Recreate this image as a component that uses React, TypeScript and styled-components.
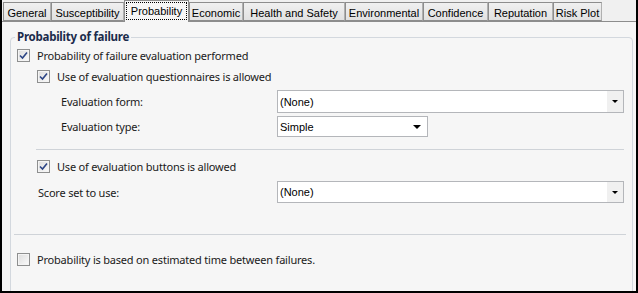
import React from 'react';
import styled, { createGlobalStyle } from 'styled-components';

const GlobalStyle = createGlobalStyle`
  html, body {
    margin: 0;
    padding: 0;
    background: #f0f0f0;
  }
  body {
    font-family: 'Noto Sans', 'Liberation Sans', sans-serif;
  }
`;

const Frame = styled.div`
  width: 638px;
  height: 293px;
  box-sizing: border-box;
  border: solid 2px #000;
  border-top: none;
  background: #f0f0f0;
  display: flex;
  flex-direction: column;
  overflow: hidden;
`;

const TabStrip = styled.ul`
  list-style: none;
  margin: 0;
  padding: 1px 0 0 1px;
  height: 21px;
  box-sizing: border-box;
  display: flex;
  align-items: flex-end;
  position: relative;
  z-index: 1;
`;

const Tab = styled.li<{ $active?: boolean; $w: number }>`
  font-family: 'Liberation Sans', Arial, sans-serif;
  font-size: 11px;
  color: #000;
  box-sizing: border-box;
  width: ${(p) => p.$w}px;
  height: ${(p) => (p.$active ? '22px' : '19px')};
  margin-bottom: ${(p) => (p.$active ? '-1px' : '0')};
  padding: ${(p) => (p.$active ? '2px 2px 0' : '2px 0 0')};
  border: solid 1px #8d8d8d;
  border-right-color: ${(p) => (p.$active ? '#8d8d8d' : '#b0b0b0')};
  border-bottom: ${(p) => (p.$active ? 'none' : 'solid 1px #8d8d8d')};
  background: ${(p) => (p.$active ? '#f6f6f6' : 'linear-gradient(#f0f0f0, #e1e1e1)')};
  line-height: 14px;
  white-space: nowrap;
  text-align: center;
  flex: none;

  & > span {
    display: ${(p) => (p.$active ? 'block' : 'inline')};
    outline: ${(p) => (p.$active ? 'dotted 1px #000' : 'none')};
    line-height: 16px;
  }
`;

const Panel = styled.div`
  flex: 1;
  border-top: solid 1px #8d8d8d;
  background: #f6f6f6;
  padding: 7px 3px 0 8px;
  overflow: hidden;
`;

const Group = styled.fieldset`
  margin: 0;
  padding: 0 0 30px;
  border: solid 1px #d3d8de;
  border-radius: 4px;
  min-width: 0;
`;

const Legend = styled.legend`
  margin-left: 4px;
  padding: 0 2px;
  font-size: 11.5px;
  letter-spacing: -0.25px;
  font-weight: bold;
  line-height: 16px;
  color: #1b2b4b;
`;

const Row = styled.div<{ $indent: number; $mt?: number; $h: number }>`
  display: flex;
  align-items: center;
  height: ${(p) => p.$h}px;
  margin-top: ${(p) => p.$mt ?? 0}px;
  padding-left: ${(p) => p.$indent}px;
  padding-right: 8px;
  font-size: 11px;
  letter-spacing: -0.2px;
  color: #1a1a1a;
`;

const Box = styled.span`
  width: 13px;
  height: 13px;
  box-sizing: border-box;
  border: solid 1px #8e8f8f;
  background: linear-gradient(135deg, #dcdcdc, #fbfbfb);
  box-shadow: inset 0 0 0 1px #f4f4f4;
  display: inline-flex;
  align-items: center;
  justify-content: center;
  margin-right: 7px;
  flex: none;
`;

const Label = styled.span<{ $w?: number }>`
  width: ${(p) => (p.$w ? `${p.$w}px` : 'auto')};
  flex: none;
  white-space: nowrap;
`;

const Select = styled.div<{ $w?: number }>`
  box-sizing: border-box;
  width: ${(p) => (p.$w ? `${p.$w}px` : 'auto')};
  flex: ${(p) => (p.$w ? 'none' : '1')};
  height: 100%;
  border: solid 1px #b4b6ba;
  background: #fff;
  display: flex;
  align-items: stretch;
  font-family: 'Liberation Sans', Arial, sans-serif;
  font-size: 11px;
  letter-spacing: 0;
  color: #000;

  & > span {
    flex: 1;
    display: flex;
    align-items: center;
    padding-left: 2px;
  }
`;

const Arrow = styled.i<{ $flat?: boolean }>`
  width: ${(p) => (p.$flat ? '20px' : '16px')};
  background: ${(p) => (p.$flat ? '#fff' : '#f0f0f0')};
  display: flex;
  align-items: center;
  justify-content: center;

  &::after {
    content: '';
    border-left: ${(p) => (p.$flat ? '4px' : '3px')} solid transparent;
    border-right: ${(p) => (p.$flat ? '4px' : '3px')} solid transparent;
    border-top: ${(p) => (p.$flat ? '4px' : '3px')} solid #000;
  }
`;

const Separator = styled.hr<{ $left: number; $right: number; $mt: number }>`
  margin: ${(p) => `${p.$mt}px ${p.$right}px 0 ${p.$left}px`};
  border: none;
  height: 1px;
  background: #cfd3d8;
`;

const tabs = [
  { title: 'General', width: 48 },
  { title: 'Susceptibility', width: 73 },
  { title: 'Probability', width: 65 },
  { title: 'Economic', width: 54 },
  { title: 'Health and Safety', width: 102 },
  { title: 'Environmental', width: 78 },
  { title: 'Confidence', width: 65 },
  { title: 'Reputation', width: 65 },
  { title: 'Risk Plot', width: 49 },
];

const Check = ({ checked, children }: { checked?: boolean; children: React.ReactNode }) => (
  <>
    <Box>
      {checked && (
        <svg width="9" height="9" viewBox="0 0 9 9">
          <path d="M1 4.5 L3.5 7 L8 1.5" fill="none" stroke="#2c4585" strokeWidth="1.6" />
        </svg>
      )}
    </Box>
    <span>{children}</span>
  </>
);

export default function App() {
  return (
    <Frame>
      <GlobalStyle />
      <TabStrip>
        {tabs.map((t) => (
          <Tab key={t.title} $w={t.width} $active={t.title === 'Probability'}>
            <span>{t.title}</span>
          </Tab>
        ))}
      </TabStrip>
      <Panel>
        <Group>
          <Legend>Probability of failure</Legend>
          <Row $indent={6} $h={21}>
            <Check checked>Probability of failure evaluation performed</Check>
          </Row>
          <Row $indent={26} $h={20}>
            <Check checked>Use of evaluation questionnaires is allowed</Check>
          </Row>
          <Row $indent={50} $h={23} $mt={4}>
            <Label $w={216}>Evaluation form:</Label>
            <Select>
              <span>(None)</span>
              <Arrow />
            </Select>
          </Row>
          <Row $indent={50} $h={21} $mt={3}>
            <Label $w={216}>Evaluation type:</Label>
            <Select $w={151}>
              <span>Simple</span>
              <Arrow $flat />
            </Select>
          </Row>
          <Separator $left={25} $right={8} $mt={12} />
          <Row $indent={26} $h={20} $mt={6}>
            <Check checked>Use of evaluation buttons is allowed</Check>
          </Row>
          <Row $indent={27} $h={22} $mt={5}>
            <Label $w={239}>Score set to use:</Label>
            <Select>
              <span>(None)</span>
              <Arrow />
            </Select>
          </Row>
          <Separator $left={3} $right={6} $mt={31} />
          <Row $indent={6} $h={20} $mt={14}>
            <Check>Probability is based on estimated time between failures.</Check>
          </Row>
        </Group>
      </Panel>
    </Frame>
  );
}
